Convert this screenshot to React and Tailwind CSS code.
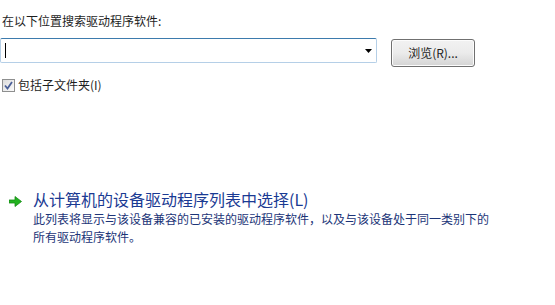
export default function App() {
  return (
    <div
      className="w-[555px] h-[305px] bg-white text-[12px] text-[#1e1e1e] overflow-hidden"
      style={{ fontFamily: '"Noto Sans CJK SC", "Microsoft YaHei", sans-serif' }}
    >
      <div className="pl-[2px] pt-[13px] leading-[16px]">在以下位置搜索驱动程序软件:</div>

      <div className="flex items-start mt-[9px]">
        <div className="relative w-[377px] h-[25px] border border-[#b5cfe7] border-t-[#3d7bad] rounded-[2px] bg-white">
          <div className="absolute left-[4px] top-[4px] w-[1px] h-[15px] bg-black" />
          <svg className="absolute right-[4px] top-[10px]" width="7" height="4" viewBox="0 0 7 4">
            <path d="M0 0 H7 L3.5 4 Z" fill="#000" />
          </svg>
        </div>
        <button className="ml-[14px] mt-[1px] w-[84px] h-[28px] rounded-[3px] border border-[#707070] bg-gradient-to-b from-[#f2f2f2] via-[#ebebeb] to-[#d4d4d4] text-[12px] text-[#1e1e1e] leading-none shadow-[inset_0_0_0_1px_#fcfcfc]">
          浏览(R)...
        </button>
      </div>

      <div className="flex items-center mt-[11px] pl-[2px] h-[14px]">
        <div className="w-[13px] h-[13px] border border-[#8e8f8f] bg-gradient-to-br from-[#dcdcdc] to-[#fbfbfb] flex items-center justify-center">
          <svg width="9" height="9" viewBox="0 0 9 9">
            <path d="M1 4.5 L3.5 7.5 L8 1" fill="none" stroke="#4a5f97" strokeWidth="1.8" />
          </svg>
        </div>
        <span className="ml-[3px] leading-[14px]">包括子文件夹(I)</span>
      </div>

      <div className="flex mt-[97px]">
        <div className="w-[33px] pl-[9px] pt-[7px]">
          <svg width="13" height="11" viewBox="0 0 13 11">
            <path d="M0 4 H6 V0.5 L12.5 5.5 L6 10.5 V7 H0 Z" fill="#22b21f" stroke="#178a16" strokeWidth="0.8" />
          </svg>
        </div>
        <div className="flex flex-col">
          <div className="text-[16px] leading-[20px] text-[#1a3a93]">从计算机的设备驱动程序列表中选择(L)</div>
          <div className="text-[12px] leading-[18px] text-[#1c3578] mt-[1px]">
            此列表将显示与该设备兼容的已安装的驱动程序软件，以及与该设备处于同一类别下的
            <br />
            所有驱动程序软件。
          </div>
        </div>
      </div>
    </div>
  );
}
